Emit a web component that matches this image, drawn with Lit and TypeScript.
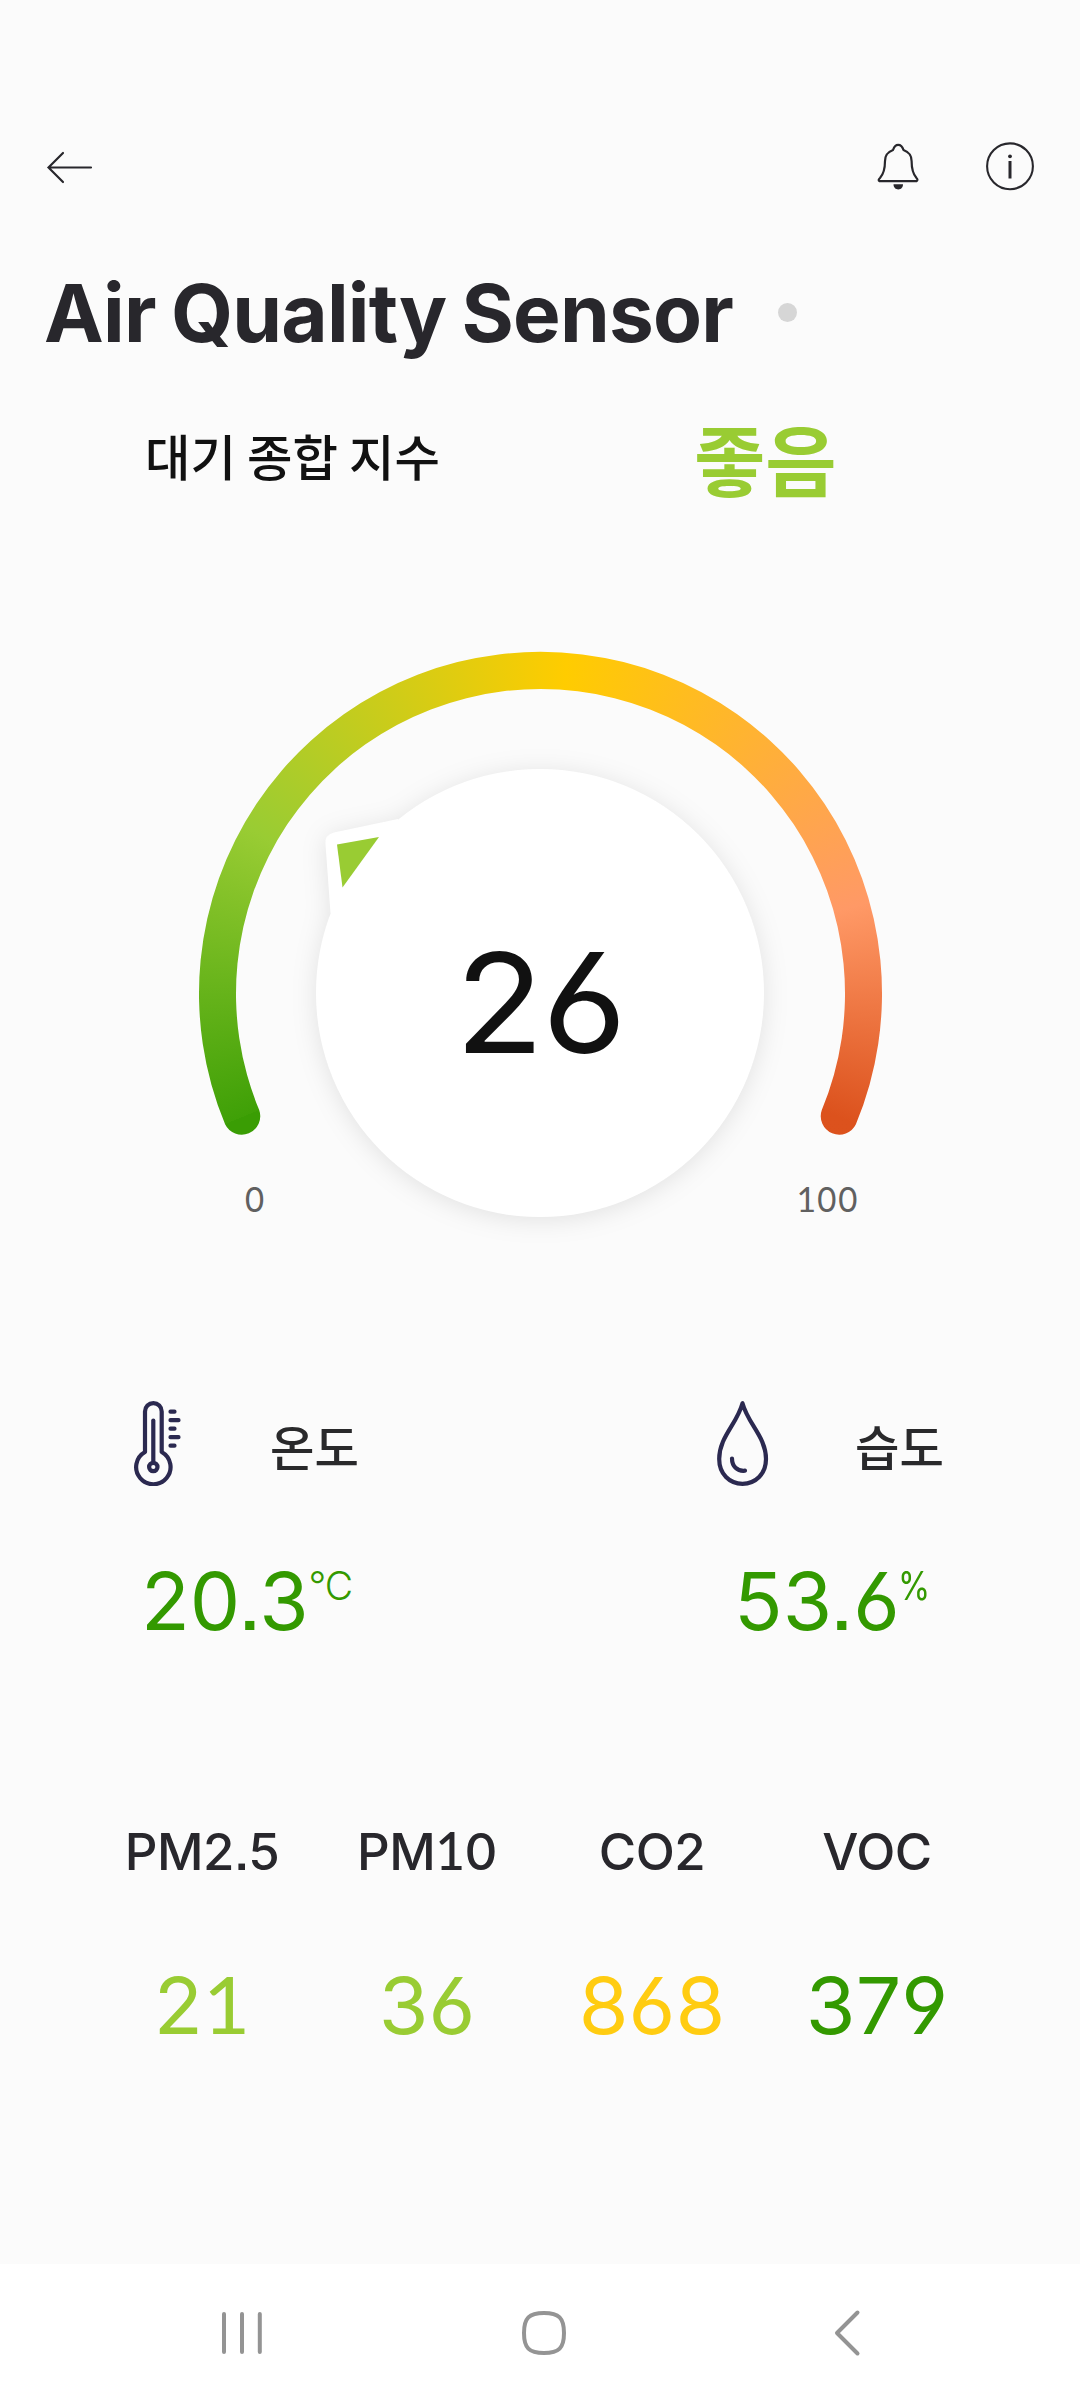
import { LitElement, html, css, svg } from "lit";
import { customElement, property } from "lit/decorators.js";

/** Splits a reading so that the footed numeral one gets its own face. */
const digits = (s: string) =>
  [...s].map((c) => (c === "1" ? html`<span class="one">1</span>` : c));

const numerals = css`
  .num { font-feature-settings: "cv03", "cv04", "ss07"; }
  .one { font-family: Lato, "Liberation Sans", sans-serif; font-size: 1.01em; line-height: 0; }
`;

@customElement("air-gauge")
export class AirGauge extends LitElement {
  @property({ type: Number }) value = 0;

  static styles = [numerals, css`
    :host { display: grid; width: 684px; height: 684px; margin: 0 auto; }
    .arc, .dial, .value, .scale { grid-area: 1 / 1; }
    .arc {
      width: 684px; height: 684px;
      background: conic-gradient(from 247.5deg at 342.5px 342.5px,
        #3fa007 0deg, #99cc33 52deg, #ffcc00 117deg, #ff9966 187deg, #dc521d 225deg, #d94d19 292deg, #3a9d04 293deg);
      clip-path: path("M27.1 473.3 A341.5 341.5 0 1 1 657.9 473.3 A18.5 18.5 0 0 1 623.8 459.1 A304.5 304.5 0 1 0 61.2 459.1 A18.5 18.5 0 0 1 27.1 473.3 Z");
    }
    .dial { width: 684px; height: 684px; overflow: visible; }
    .body { filter: drop-shadow(0 3px 12px rgba(0, 0, 0, 0.1)); }
    .value {
      place-self: center; margin-top: 19px; transform: scaleX(1.05);
      font-size: 139px; line-height: 160px; font-weight: 400; color: #111; letter-spacing: -2px;
    }
    .scale {
      display: flex; justify-content: space-between; align-self: start;
      margin-top: 528px; padding: 0 23.5px 0 46px;
      font-size: 33.5px; line-height: 42px; color: #606060;
    }
  `];

  render() {
    return html`
      <div class="arc"></div>
      <svg class="dial" viewBox="0 0 684 684">
        <g class="body" fill="#fff">
          <circle cx="342" cy="342" r="224" />
          <path d="M200 168 L136 181.5 Q126.5 184 127.5 193 L132.5 262 L200 300 Z" />
        </g>
        <path d="M139 193.5 L181 186 L144.500 236.5 Z" fill="#99cc33" />
      </svg>
      <div class="value num">${digits(String(this.value))}</div>
      <div class="scale"><span>0</span><span>${digits("100")}</span></div>
    `;
  }
}

const thermometer = svg`
  <svg width="47" height="85" viewBox="134 1401 47 85" fill="none" stroke="#2b2950" stroke-width="4.200" stroke-linecap="round">
    <path d="M145 1452V1411.500a8.300 8.300 0 0 1 16.700 0V1452A17.200 17.200 0 1 1 145 1452Z" stroke-linejoin="round"/>
    <path d="M153.300 1420.500V1461"/>
    <circle cx="153.300" cy="1467" r="4.200"/>
    <path d="M170.500 1411.700h4M170.500 1420.200h8M170.500 1428.700h4M170.500 1437.200h8M170.500 1445.700h4"/>
  </svg>`;

const drop = svg`
  <svg width="52" height="85" viewBox="717 1401 52 85" fill="none" stroke="#2b2950" stroke-width="4.200" stroke-linecap="round" stroke-linejoin="round">
    <path d="M742.500 1403.200C737 1424 719.200 1437 719.200 1459C719.200 1474 729.500 1483.800 742.500 1483.800S766 1474 766 1459C766 1437 748 1424 742.500 1403.200Z"/>
    <path d="M732 1458.500C732 1466 737 1471.500 745 1470.700"/>
  </svg>`;

@customElement("app-root")
export class AppRoot extends LitElement {
  private metrics = [
    { name: "PM2.5", value: "21", level: "fair" },
    { name: "PM10", value: "36", level: "fair" },
    { name: "CO2", value: "868", level: "warn" },
    { name: "VOC", value: "379", level: "good" },
  ];

  static styles = [numerals, css`
    :host {
      display: flex; flex-direction: column; box-sizing: border-box;
      width: 1080px; height: 2400px; overflow: hidden;
      background: #fbfbfb; color: #28272c;
      font-family: Inter, "Noto Sans CJK KR", sans-serif;
    }
    svg { display: block; flex: none; }
    .kr { font-family: "Noto Sans CJK KR", sans-serif; }
    .bar { display: flex; align-items: center; height: 66px; margin-top: 133px; padding: 0 44px 0 46px; }
    .actions { display: flex; align-items: center; gap: 64px; margin-left: auto; }
    .heading { display: flex; align-items: center; height: 80px; margin-top: 74px; padding-left: 44px; }
    h1 { margin: 0; font-size: 80px; line-height: 80px; font-weight: 700; letter-spacing: -0.8px; word-spacing: -3px; white-space: nowrap; }
    .status { width: 19px; height: 19px; border-radius: 50%; background: #d6d6d6; margin: -2px 0 0 45px; }
    .summary { display: flex; align-items: center; height: 100px; margin-top: 54px; padding-left: 145px; }
    .label { width: 549px; font-size: 49.4px; line-height: 60px; font-weight: 500; color: #111; margin-top: -4px; }
    .grade { font-size: 77.5px; line-height: 90px; font-weight: 700; color: #99cc33; }
    air-gauge { margin-top: 144px; flex: none; }
    .climate { display: grid; grid-template-columns: 583px 1fr; margin-top: 65.5px; padding-left: 134px; }
    .kind { display: flex; height: 85px; align-items: center; }
    .kind .kr { font-size: 48.3px; line-height: 60px; font-weight: 500; color: #29292b; padding-top: 4px; }
    .temp .kr { margin-left: 89px; }
    .hum .kr { margin-left: 86px; }
    .reading { display: flex; align-items: flex-start; margin-top: 75px; font-size: 80px; line-height: 80px; letter-spacing: 0; }
    .temp .reading { padding-left: 7px; }
    .hum .reading { padding-left: 17px; }
    .unit { font-size: 39px; line-height: 50px; font-weight: 300; letter-spacing: -1px; margin-left: 0; }
    .percent { transform: scaleX(0.84); transform-origin: left; font-weight: 400; margin-left: -1.5px; }
    .metrics { display: grid; grid-template-columns: repeat(4, 225px); justify-content: center; margin-top: 181px; text-align: center; }
    .name { font-size: 51px; line-height: 60px; font-weight: 500; letter-spacing: -0.5px; padding-right: 1px; font-feature-settings: "ss07"; }
    .amount { margin-top: 84px; font-size: 79px; line-height: 78px; transform: scaleX(1.02); padding-right: 1px; }
    .good { color: #339900; }
    .fair { color: #99cc33; }
    .warn { color: #ffcc11; }
    .nav { display: block; height: 136px; margin-top: auto; background: #fff; }
    .nav svg { width: 1080px; height: 136px; }
  `];

  render() {
    return html`
      <header class="bar">
        <svg width="48" height="36" viewBox="0 0 48 36" fill="none" stroke="#28272c" stroke-width="2.200" stroke-linecap="round">
          <path d="M45 19.500H2.500M17 5L2.500 19.500L17 34"/>
        </svg>
        <div class="actions">
          <svg width="44" height="50" viewBox="876 141 44 50" fill="none" stroke="#28272c" stroke-width="2.200" stroke-linejoin="round">
            <path d="M879.500 181.200H916.500C918 180.500 917.500 179 916.500 178C912.500 173.500 911.600 168 911.600 161C911.600 154.500 908.500 152 903.500 150C902.500 147 901 144.800 898.200 144.800S894 147 893 150C888 152 885 154.500 885 161C885 168 884 173.500 880 178C878.700 179.200 878 180.500 879.500 181.200Z"/>
            <path d="M893.500 184.300H903C903 187.500 901 189.500 898.300 189.500S893.500 187.500 893.500 184.300Z" fill="#28272c" stroke="none"/>
          </svg>
          <svg width="52" height="50" viewBox="984 141 52 50">
            <circle cx="1010" cy="166.300" r="22.900" fill="none" stroke="#28272c" stroke-width="2.100"/>
            <circle cx="1010" cy="156.300" r="1.900" fill="#28272c"/>
            <path d="M1010 161V178.500" stroke="#28272c" stroke-width="3"/>
          </svg>
        </div>
      </header>

      <div class="heading"><h1>Air Quality Sensor</h1><span class="status"></span></div>

      <div class="summary">
        <div class="label kr">대기 종합 지수</div>
        <div class="grade kr">좋음</div>
      </div>

      <air-gauge .value=${26}></air-gauge>

      <section class="climate">
        <div class="temp">
          <div class="kind">${thermometer}<span class="kr">온도</span></div>
          <div class="reading num good">20.3<span class="unit">°C</span></div>
        </div>
        <div class="hum">
          <div class="kind">${drop}<span class="kr">습도</span></div>
          <div class="reading num good">53.6<span class="unit percent">%</span></div>
        </div>
      </section>

      <section class="metrics">
        ${this.metrics.map((m) => html`
          <div>
            <div class="name">${digits(m.name)}</div>
            <div class="amount num ${m.level}">${digits(m.value)}</div>
          </div>`)}
      </section>

      <nav class="nav">
        <svg viewBox="0 2264 1080 136" fill="none" stroke="#949494" stroke-width="4" stroke-linecap="round" stroke-linejoin="round">
          <path d="M224 2314V2352M242 2314V2352M259.800 2314V2352"/>
          <path d="M544 2313C559 2313 564 2318 564 2333S559 2353 544 2353S524 2348 524 2333S529 2313 544 2313Z"/>
          <path d="M857.500 2312.500L837 2333L857.500 2353.500"/>
        </svg>
      </nav>
    `;
  }
}
